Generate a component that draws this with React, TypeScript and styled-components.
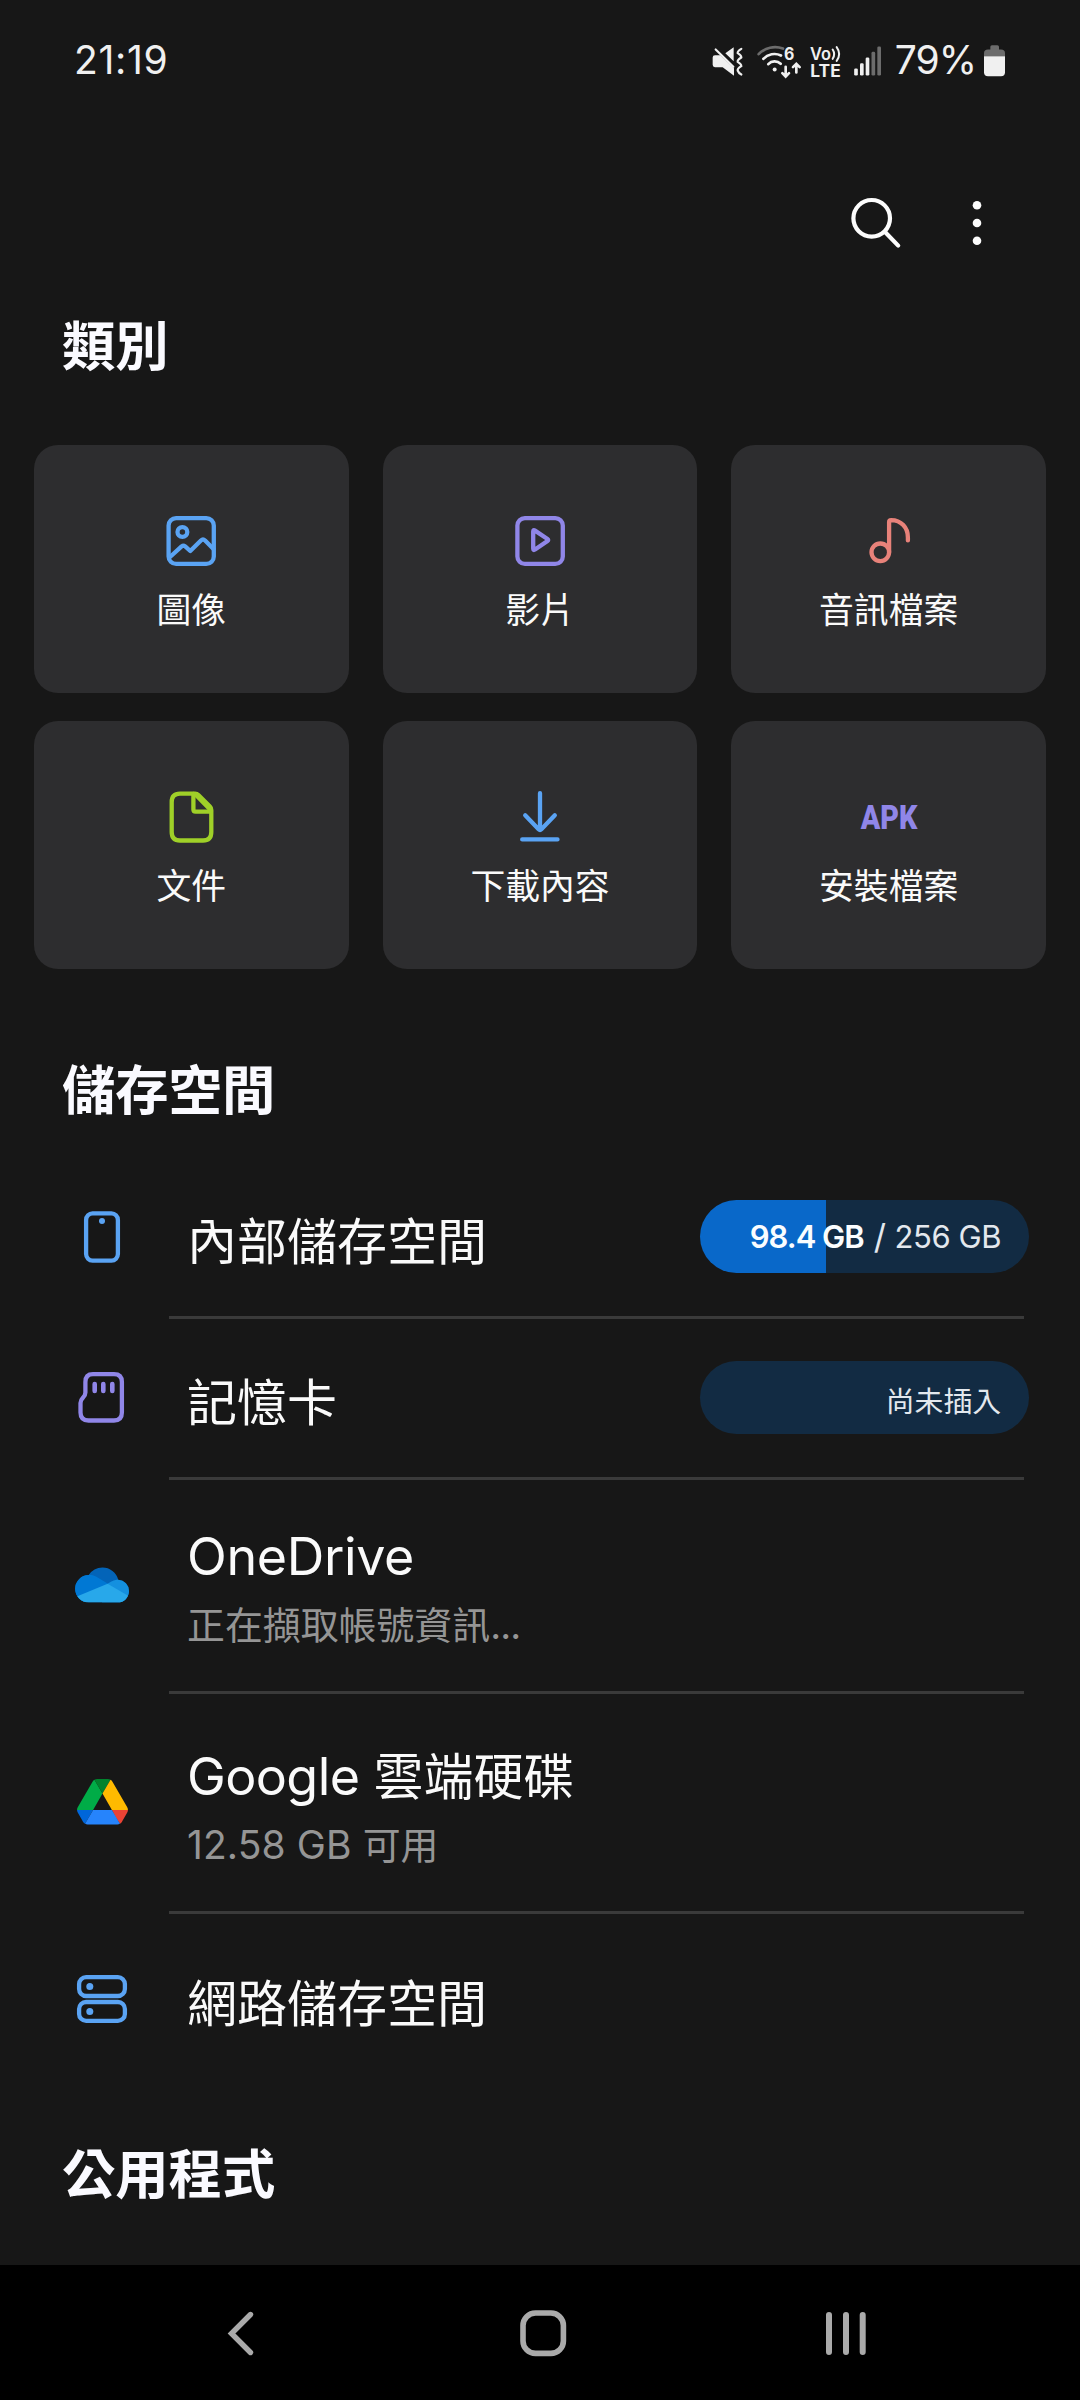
import React from 'react';
import styled, { createGlobalStyle } from 'styled-components';

const LATIN = 'Inter, "Noto Sans CJK TC", sans-serif';
const BLUE = '#5aa3f3';
const VIOLET = '#9086e8';

const GlobalStyle = createGlobalStyle`
  body {
    margin: 0;
    background: #171717;
  }

  svg {
    overflow: visible;
  }
`;

const Screen = styled.div`
  display: flex;
  flex-direction: column;
  width: 1080px;
  height: 2400px;
  overflow: hidden;
  background: #171717;
  color: #fafafa;
  font-family: ${LATIN};
`;

const StatusBar = styled.header`
  display: flex;
  align-items: center;
  flex: none;
  height: 119px;
  padding: 0 74px 0 74px;
  box-sizing: border-box;
  color: #f0f0f0;
`;

const Clock = styled.div`
  flex: 1;
  font-size: 39px;
  line-height: 48px;
  letter-spacing: 0.7px;
`;

const StatusIcon = styled.svg<{ $w: number; $gap?: number }>`
  flex: none;
  width: ${(p) => p.$w}px;
  height: 36px;
  margin-right: ${(p) => p.$gap ?? 0}px;
`;

const BatteryLevel = styled.div`
  width: 82px;
  margin-right: 7px;
  text-align: right;
  white-space: nowrap;
  font-size: 39px;
  line-height: 48px;
  letter-spacing: -1px;
`;

const Toolbar = styled.nav`
  display: flex;
  justify-content: flex-end;
  align-items: center;
  flex: none;
  height: 96px;
  margin-top: 56px;
  padding-right: 67px;
  gap: 34px;
`;

const ToolButton = styled.button`
  display: flex;
  padding: 0;
  border: 0;
  background: none;
  color: #fcfcfc;
`;

const Heading = styled.h2<{ $top: number; $bottom: number }>`
  flex: none;
  margin: ${(p) => p.$top}px 0 ${(p) => p.$bottom}px 62px;
  font-size: 53.3px;
  font-weight: 700;
  line-height: 76px;
  color: #fafaff;
`;

const CategoryGrid = styled.section`
  display: grid;
  flex: none;
  grid-template-columns: repeat(3, 1fr);
  grid-auto-rows: 248px;
  gap: 28px 34px;
  padding: 0 34px;
`;

const CategoryCard = styled.div`
  display: flex;
  flex-direction: column;
  align-items: center;
  padding-top: 66px;
  box-sizing: border-box;
  border-radius: 24px;
  background: #2d2d2f;
`;

const CategoryLabel = styled.span`
  margin-top: 14px;
  font-size: 34.8px;
  line-height: 50px;
`;

const StorageList = styled.section`
  display: flex;
  flex-direction: column;
  flex: none;
`;

const StorageRow = styled.div<{ $h: number }>`
  display: flex;
  align-items: center;
  height: ${(p) => p.$h}px;
  padding: 0 51px 0 70px;
`;

const Divider = styled.hr`
  width: 855px;
  height: 3px;
  margin: 0 0 0 169px;
  border: 0;
  background: #3a3a3a;
`;

const RowIcon = styled.div<{ $lift?: number }>`
  display: flex;
  justify-content: center;
  width: 64px;
  margin-right: 53px;
  padding-bottom: ${(p) => p.$lift ?? 0}px;
`;

const RowText = styled.div<{ $shift: number }>`
  display: flex;
  flex: 1;
  flex-direction: column;
  gap: 8px;
  padding-top: ${(p) => p.$shift}px;
`;

const RowTitle = styled.div`
  font-size: 50px;
  line-height: 70px;
`;

const RowNote = styled.div`
  font-size: 37.9px;
  line-height: 50px;
  color: #959595;
`;

const Latin = styled.span<{ $size: number; $track: number }>`
  font-size: ${(p) => p.$size}px;
  letter-spacing: ${(p) => p.$track}px;
`;

const UsagePill = styled.div<{ $percent: number }>`
  display: flex;
  justify-content: flex-end;
  align-items: center;
  width: 329px;
  height: 73px;
  margin-bottom: 1px;
  padding-right: 28px;
  box-sizing: border-box;
  border-radius: 37px;
  background: linear-gradient(to right, #0968c9 ${(p) => p.$percent}%, #122b43 ${(p) => p.$percent}%);
  font-size: 31px;
  letter-spacing: -0.45px;
  white-space: pre;
  color: #e3e8ee;
`;

const Used = styled.b`
  font-weight: 600;
  letter-spacing: -1px;
  color: #fafdff;
`;

const Slash = styled.span`
  margin: 0 9px 0 10px;
  font-size: 34px;
`;

const PillNote = styled.span`
  padding-top: 3px;
  font-size: 28.8px;
  letter-spacing: 0;
`;

const Spacer = styled.div`
  flex: 1;
`;

const NavBar = styled.footer`
  display: flex;
  align-items: center;
  justify-content: space-between;
  flex: none;
  height: 135px;
  padding: 0 204px 0 210px;
  box-sizing: border-box;
  background: #000;
`;

const Glyph = ({ color, children }: { color: string; children: React.ReactNode }) => (
  <svg
    width="60"
    height="60"
    viewBox="0 0 60 60"
    fill="none"
    stroke={color}
    strokeWidth="4.3"
    strokeLinecap="round"
    strokeLinejoin="round"
  >
    {children}
  </svg>
);

const categories = [
  {
    label: '圖像',
    icon: (
      <Glyph color={BLUE}>
        <rect x="7.6" y="7.1" width="45.2" height="45.8" rx="7.5" />
        <circle cx="21.4" cy="21" r="4.9" />
        <path d="M9 46 L20.6 35.4 Q22.4 34 24.2 35.4 L29.3 40 L39.9 29.5 Q42 27.6 44.1 29.5 L52.5 38" />
      </Glyph>
    ),
  },
  {
    label: '影片',
    icon: (
      <Glyph color={VIOLET}>
        <rect x="7.4" y="7.1" width="45.4" height="45.8" rx="7.5" />
        <path d="M23.2 20.6 Q23.2 18.4 25 19.6 L37.5 28 Q38.9 29 37.5 30 L25 38.6 Q23.2 39.8 23.2 37.6 Z" />
      </Glyph>
    ),
  },
  {
    label: '音訊檔案',
    icon: (
      <Glyph color="#e8827a">
        <circle cx="21.3" cy="41.3" r="8.8" />
        <path d="M30.1 41.3 V11 Q30.1 9.1 32.2 9.1 C42 9.1 49 16.5 48.9 26.5 V29.4" />
      </Glyph>
    ),
  },
  {
    label: '文件',
    icon: (
      <Glyph color="#9fd028">
        <path d="M19 6.6 H34 Q36 6.6 37.4 8 L48.9 19.6 Q50.3 21 50.3 23 V45 Q50.3 53.5 42 53.5 H19 Q10.7 53.5 10.7 45 V15 Q10.7 6.6 19 6.6 Z" />
        <path d="M32.4 7 V22.6 Q32.4 24.7 34.5 24.7 H50" />
        <path d="M35 8.4 L48.6 22.4" strokeWidth="3.6" />
      </Glyph>
    ),
  },
  {
    label: '下載內容',
    icon: (
      <Glyph color={BLUE}>
        <path d="M30 6.2 V42 M15.2 28.3 L28.6 42.2 Q30 43.6 31.4 42.2 L44.8 28.3 M12.2 52.4 H47.5" />
      </Glyph>
    ),
  },
  {
    label: '安裝檔案',
    icon: (
      <svg width="60" height="60" viewBox="0 0 60 60" fill={VIOLET}>
        <text
          x="1.8"
          y="42"
          fontFamily="Roboto, sans-serif"
          fontSize="33.6"
          fontWeight="900"
          textLength="56.6"
          lengthAdjust="spacingAndGlyphs"
        >
          APK
        </text>
      </svg>
    ),
  },
];

const PhoneIcon = () => (
  <Glyph color={BLUE}>
    <rect x="14.1" y="6.4" width="31.8" height="47.2" rx="6.5" />
    <circle cx="30" cy="14" r="3" fill={BLUE} stroke="none" />
  </Glyph>
);

const CardIcon = () => (
  <Glyph color={VIOLET}>
    <path d="M21 6.2 H42 Q49.9 6.2 49.9 14 V44.6 Q49.9 52.5 42 52.5 H16.5 Q8.5 52.5 8.5 44.6 V35 Q8.5 32.3 10.9 29.8 Q13.4 27.4 13.4 24.5 V14 Q13.4 6.2 21 6.2 Z" />
    <path d="M22.7 16 V23 M31.3 16 V23 M40.3 16 V23" strokeWidth="4.6" />
  </Glyph>
);

const OneDriveIcon = () => (
  <svg width="60" height="60" viewBox="0 0 60 60">
    <clipPath id="cloud">
      <circle cx="16.8" cy="32.8" r="13.7" />
      <circle cx="45.6" cy="35.1" r="11.4" />
      <circle cx="30.5" cy="27.8" r="16.3" />
      <rect x="16.8" y="30" width="28.8" height="16.5" />
    </clipPath>
    <g clipPath="url(#cloud)">
      <rect width="60" height="46.5" fill="#0364b8" />
      <path d="M36 27.6 Q42 23.4 48 23.6 L60 23 V46.5 H30 Z" fill="#1490df" />
      <path d="M0 15 L15 19 Q20 18.2 24 20.6 L36 27.8 L20 46 H0 Z" fill="#0078d4" />
      <path d="M0 42.6 L35.6 27.8 L60 42 V46.5 H0 Z" fill="#28a8ea" />
    </g>
  </svg>
);

const DriveIcon = () => (
  <svg width="51" height="45.5" viewBox="0 0 87.3 78">
    <path d="m6.6 66.85 3.85 6.65c.8 1.4 1.95 2.5 3.3 3.3l13.75-23.8h-27.5c0 1.55.4 3.1 1.2 4.5z" fill="#0066da" />
    <path d="m43.65 25-13.75-23.8c-1.35.8-2.5 1.9-3.3 3.3l-25.4 44a9.06 9.06 0 0 0 -1.2 4.5h27.5z" fill="#00ac47" />
    <path d="m73.55 76.8c1.35-.8 2.5-1.9 3.3-3.3l1.6-2.75 7.65-13.25c.8-1.4 1.2-2.95 1.2-4.5h-27.502l5.852 11.5z" fill="#ea4335" />
    <path d="m43.65 25 13.75-23.8c-1.35-.8-2.9-1.2-4.5-1.2h-18.5c-1.6 0-3.15.45-4.5 1.2z" fill="#00832d" />
    <path d="m59.8 53h-32.3l-13.75 23.8c1.35.8 2.9 1.2 4.5 1.2h50.8c1.6 0 3.15-.45 4.5-1.2z" fill="#2684fc" />
    <path d="m73.4 26.5-12.7-22c-.8-1.4-1.95-2.5-3.3-3.3l-13.75 23.8 16.15 28h27.45c0-1.55-.4-3.1-1.2-4.5z" fill="#ffba00" />
  </svg>
);

const NetworkIcon = () => (
  <Glyph color={BLUE}>
    <rect x="7.1" y="8.1" width="45.8" height="18.9" rx="7" />
    <rect x="7.1" y="33" width="45.8" height="18.9" rx="7" />
    <circle cx="17.8" cy="17.5" r="3.5" fill={BLUE} stroke="none" />
    <circle cx="17.8" cy="42.5" r="3.5" fill={BLUE} stroke="none" />
  </Glyph>
);

const StatusIcons = () => (
  <>
    <StatusIcon $w={31} $gap={14} viewBox="96 64.5 93 108" fill="#f0f0f0">
      <path d="M105 104 H121 L162 143 V166 L128 140 H105 Q98 140 98 133 V111 Q98 104 105 104 Z M136 98 L161 80 V122 Z" />
      <path
        d="M107 87 L160 139 M184 85 Q172 92 173 98 Q184 104 184 111 Q172 118 173 124 Q184 130 184 137 Q172 144 173 150 Q176 158 184 162"
        fill="none"
        stroke="#f0f0f0"
        strokeWidth="6.5"
        strokeLinecap="round"
      />
    </StatusIcon>
    <StatusIcon $w={45} $gap={8} viewBox="231 64.5 135 108" fill="none" strokeWidth="8" strokeLinecap="round">
      <path d="M236 101 A68 68 0 0 1 309 84" stroke="#6c6c6c" />
      <path d="M250 115 A46 46 0 0 1 303 105 M265 131 A26 26 0 0 1 302 130" stroke="#f0f0f0" />
      <circle cx="284" cy="147" r="6" fill="#f0f0f0" />
      <path d="M317 139 V166 M307 158 L317 168 L327 158 M349 156 V131 M339 140 L349 130 L359 140" stroke="#f0f0f0" />
      <text x="312" y="117" fill="#f0f0f0" fontFamily="Inter, sans-serif" fontSize="51" fontWeight="700" textLength="31" lengthAdjust="spacingAndGlyphs">
        6
      </text>
    </StatusIcon>
    <StatusIcon $w={32} $gap={11} viewBox="390 64.5 96 108" fill="#f0f0f0">
      <text x="390" y="117" fontFamily="Inter, sans-serif" fontSize="50" fontWeight="600" textLength="63" lengthAdjust="spacingAndGlyphs">
        Vo
      </text>
      <text x="391" y="169" fontFamily="Inter, sans-serif" fontSize="50" fontWeight="700" textLength="91" lengthAdjust="spacingAndGlyphs">
        LTE
      </text>
      <path d="M458 87 Q467 101 458 115 M470 80 Q485 101 470 121" fill="none" stroke="#f0f0f0" strokeWidth="6" strokeLinecap="round" />
    </StatusIcon>
    <StatusIcon $w={29} $gap={12} viewBox="519 64.5 87 108" fill="#f0f0f0">
      <rect x="522.5" y="144" width="11" height="21" rx="4" />
      <rect x="540" y="128" width="11" height="37" rx="4" />
      <rect x="557" y="111" width="11" height="54" rx="4" />
      <rect x="574.5" y="94" width="11" height="71" rx="4" fill="#6c6c6c" />
      <rect x="592" y="78" width="11" height="87" rx="4" fill="#6c6c6c" />
    </StatusIcon>
    <BatteryLevel>79%</BatteryLevel>
    <StatusIcon $w={23} viewBox="909 64.5 69 108">
      <path d="M931 87 V79 Q931 74 936 74 H952 Q957 74 957 79 V87 H963 Q975 87 975 98 V107 H912 V98 Q912 87 924 87 Z" fill="#6c6c6c" />
      <path d="M912 107 H975 V155 Q975 167 963 167 H924 Q912 167 912 155 Z" fill="#f0f0f0" />
    </StatusIcon>
  </>
);

export default function App() {
  return (
    <>
      <GlobalStyle />
      <Screen lang="zh-Hant">
        <StatusBar>
          <Clock>21:19</Clock>
          <StatusIcons />
        </StatusBar>

        <Toolbar>
          <ToolButton aria-label="搜尋">
            <svg width="64" height="64" viewBox="0 0 64 64" fill="none" stroke="currentColor" strokeWidth="4.2" strokeLinecap="round">
              <circle cx="28.7" cy="27.3" r="18.3" />
              <path d="M41.8 40.8 L55.2 54.6" />
            </svg>
          </ToolButton>
          <ToolButton aria-label="更多">
            <svg width="72" height="64" viewBox="0 0 72 64" fill="currentColor">
              <circle cx="36" cy="14.3" r="4.3" />
              <circle cx="36" cy="32" r="4.3" />
              <circle cx="36" cy="49.7" r="4.3" />
            </svg>
          </ToolButton>
        </Toolbar>

        <Heading $top={38} $bottom={60}>類別</Heading>
        <CategoryGrid>
          {categories.map((c) => (
            <CategoryCard key={c.label}>
              {c.icon}
              <CategoryLabel>{c.label}</CategoryLabel>
            </CategoryCard>
          ))}
        </CategoryGrid>

        <Heading $top={84} $bottom={29}>儲存空間</Heading>
        <StorageList>
          <StorageRow $h={158}>
            <RowIcon><PhoneIcon /></RowIcon>
            <RowText $shift={9}>
              <RowTitle>內部儲存空間</RowTitle>
            </RowText>
            <UsagePill $percent={38.3}>
              <Used>98.4 GB</Used>
              <Slash>/</Slash>
              256 GB
            </UsagePill>
          </StorageRow>
          <Divider />
          <StorageRow $h={158}>
            <RowIcon><CardIcon /></RowIcon>
            <RowText $shift={9}>
              <RowTitle>記憶卡</RowTitle>
            </RowText>
            <UsagePill $percent={0}>
              <PillNote>尚未插入</PillNote>
            </UsagePill>
          </StorageRow>
          <Divider />
          <StorageRow $h={211}>
            <RowIcon><OneDriveIcon /></RowIcon>
            <RowText $shift={1}>
              <RowTitle>
                <Latin $size={52} $track={-0.35}>OneDrive</Latin>
              </RowTitle>
              <RowNote>
                正在擷取帳號資訊<Latin $size={37.9} $track={-0.8}>...</Latin>
              </RowNote>
            </RowText>
          </StorageRow>
          <Divider />
          <StorageRow $h={217}>
            <RowIcon $lift={2}><DriveIcon /></RowIcon>
            <RowText $shift={7}>
              <RowTitle>
                <Latin $size={52} $track={-0.6}>Google </Latin>雲端硬碟
              </RowTitle>
              <RowNote>
                <Latin $size={39} $track={0.1}>12.58 GB </Latin>可用
              </RowNote>
            </RowText>
          </StorageRow>
          <Divider />
          <StorageRow $h={170}>
            <RowIcon><NetworkIcon /></RowIcon>
            <RowText $shift={9}>
              <RowTitle>網路儲存空間</RowTitle>
            </RowText>
          </StorageRow>
        </StorageList>

        <Heading $top={53} $bottom={0}>公用程式</Heading>
        <Spacer />

        <NavBar>
          <svg width="60" height="60" viewBox="0 0 60 60" fill="none" stroke="#aaaaaa" strokeWidth="5.4" strokeLinecap="round">
            <path d="M40.5 11.5 L21.5 30.5 L40.5 49.5" />
          </svg>
          <svg width="60" height="60" viewBox="0 0 60 60" fill="none" stroke="#aaaaaa" strokeWidth="5.6">
            <rect x="10" y="10" width="40.4" height="40.4" rx="12.5" />
          </svg>
          <svg width="60" height="60" viewBox="0 0 60 60" fill="none" stroke="#aaaaaa" strokeWidth="6" strokeLinecap="round">
            <path d="M13 12 V49 M30 12 V49 M46.7 12 V49" />
          </svg>
        </NavBar>
      </Screen>
    </>
  );
}
